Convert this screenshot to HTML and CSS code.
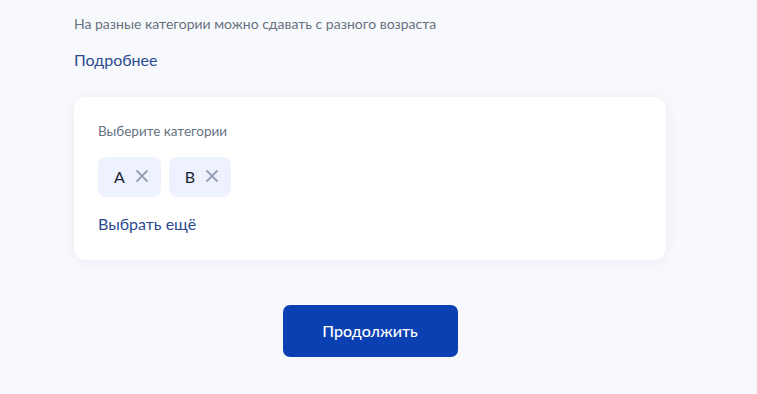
FILE: index.html
```html
<!DOCTYPE html>
<html lang="ru">
<head>
    <meta charset="UTF-8">
    <meta name="viewport" content="width=device-width, initial-scale=1.0">
    <title>Категории</title>
    <link rel="stylesheet" href="styles.css">
</head>
<body>
    <div class="page">
        <p class="hint">На разные категории можно сдавать с разного возраста</p>
        <a class="link more" href="#">Подробнее</a>
        <div class="card">
            <div class="card-label">Выберите категории</div>
            <div class="chips">
                <div class="chip">
                    <span>A</span>
                    <svg viewBox="0 0 14 14" fill="none" xmlns="http://www.w3.org/2000/svg">
                        <path d="M2 2l10 10M12 2L2 12" stroke="#97a1b5" stroke-width="1.8" stroke-linecap="round"/>
                    </svg>
                </div>
                <div class="chip">
                    <span>B</span>
                    <svg viewBox="0 0 14 14" fill="none" xmlns="http://www.w3.org/2000/svg">
                        <path d="M2 2l10 10M12 2L2 12" stroke="#97a1b5" stroke-width="1.8" stroke-linecap="round"/>
                    </svg>
                </div>
            </div>
            <a class="link" href="#">Выбрать ещё</a>
        </div>
        <div class="actions">
            <button class="btn">Продолжить</button>
        </div>
    </div>
</body>
</html>
```

FILE: styles.css
```css
body {
    margin: 0;
    padding: 0;
    font-family: Lato, 'Noto Sans', sans-serif;
    color: #0b1f33;
    background: #f8f9fc;
}
.page {
    width: 592px;
    padding: 14px 0 0 74px;
}
.hint {
    margin: 0;
    font-size: 14px;
    line-height: 20px;
    color: #66727f;
}
.link {
    display: inline-block;
    font-size: 16px;
    line-height: 24px;
    color: #2b4a8f;
    text-decoration: none;
}
.more {
    margin-top: 14px;
}
.card {
    margin-top: 25px;
    background: #fff;
    border-radius: 12px;
    padding: 24px;
    box-shadow: 0 2px 14px rgba(60, 90, 160, 0.08);
}
.card-label {
    font-size: 13.5px;
    line-height: 20px;
    color: #66727f;
}
.chips {
    display: flex;
    gap: 8px;
    margin: 16px 0 15px;
}
.chip {
    display: flex;
    align-items: center;
    gap: 10px;
    height: 40px;
    padding: 0 12px 2px 16px;
    box-sizing: border-box;
    background: #edf2fe;
    border-radius: 8px;
    font-size: 16px;
    color: #1a2433;
}
.chip svg {
    width: 14px;
    height: 14px;
}
.actions {
    display: flex;
    justify-content: center;
    margin-top: 45px;
}
.btn {
    width: 175px;
    height: 52px;
    border: none;
    border-radius: 7px;
    background: #0b40b3;
    color: #fff;
    font-family: Lato, 'Noto Sans', sans-serif;
    font-size: 16px;
    font-weight: 500;
    padding-bottom: 3px;
    cursor: pointer;
}
```
